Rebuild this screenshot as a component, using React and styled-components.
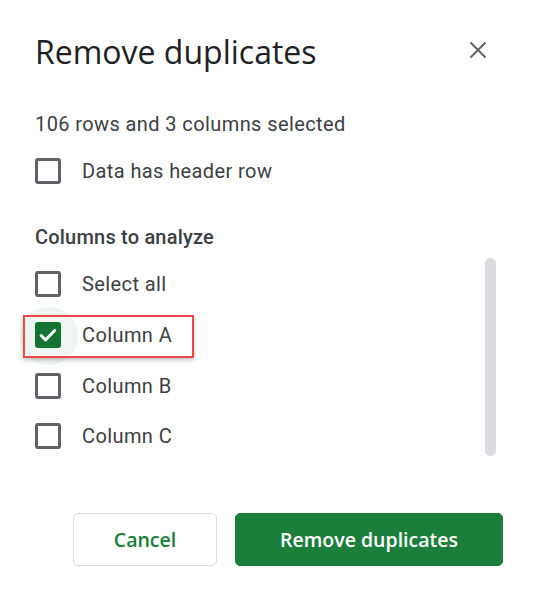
import React from "react";
import styled, { createGlobalStyle } from "styled-components";

const Global = createGlobalStyle`
  html, body { margin: 0; padding: 0; background: #fff; }
  body { font-family: Roboto, "Noto Sans", Arial, sans-serif; }
`;

const Dialog = styled.div`
  width: 536px;
  height: 600px;
  box-sizing: border-box;
  padding: 30px 33px 0 35px;
  display: flex;
  flex-direction: column;
  color: #3c4043;
`;

const Header = styled.div`
  display: flex;
  align-items: center;
  justify-content: space-between;
  height: 42px;
`;

const Title = styled.h1`
  margin: 0;
  font-family: "Open Sans", Roboto, sans-serif;
  font-weight: 400;
  font-size: 32px;
  color: #202124;
  letter-spacing: 0;
`;

const CloseButton = styled.button`
  border: 0;
  background: none;
  padding: 0;
  margin-right: 15px;
  margin-bottom: 3px;
  width: 20px;
  height: 20px;
  display: flex;
  align-items: center;
  justify-content: center;
  color: #5f6368;
  cursor: pointer;
`;

const Summary = styled.p`
  margin: 40px 0 0 0;
  font-size: 20px;
  line-height: 24px;
  letter-spacing: 0.4px;
  color: #3c4043;
`;

const SectionTitle = styled.h2`
  margin: 39px 0 0 0;
  font-size: 20px;
  line-height: 24px;
  font-weight: 500;
  letter-spacing: 0.2px;
  color: #3c4043;
`;

const ListArea = styled.div`
  display: flex;
  justify-content: space-between;
  align-items: flex-start;
  margin-top: 9px;
`;

const List = styled.div`
  display: flex;
  flex-direction: column;
  padding-top: 1px;
`;

const Row = styled.label`
  position: relative;
  flex: none;
  display: flex;
  align-items: center;
  gap: 21px;
  height: 50.7px;
  font-size: 20px;
  letter-spacing: 0.4px;
  color: #3c4043;
  ${(p) => p.$top && `height: 30px; margin-top: ${p.$top}px;`}
  ${(p) =>
    p.$highlight &&
    `
    &::after {
      content: "";
      position: absolute;
      left: -12px;
      top: 5px;
      width: 167px;
      height: 39px;
      border: 2px solid #ec4848;
      box-shadow: 0 2px 4px rgba(0,0,0,0.25);
      pointer-events: none;
    }
  `}
`;

const BoxWrap = styled.span`
  position: relative;
  width: 26px;
  height: 26px;
  flex: none;
  ${(p) =>
    p.$ripple &&
    `
    &::before {
      content: "";
      position: absolute;
      left: -15px;
      top: -15px;
      width: 58px;
      height: 58px;
      border-radius: 50%;
      background: rgba(24, 128, 56, 0.07);
    }
  `}
`;

const Box = styled.span`
  position: relative;
  box-sizing: border-box;
  display: flex;
  align-items: center;
  justify-content: center;
  width: 26px;
  height: 26px;
  border-radius: 3px;
  border: ${(p) => (p.$checked ? "none" : "3px solid #5f6368")};
  background: ${(p) => (p.$checked ? "#137333" : "#fff")};
`;

const Scrollbar = styled.div`
  width: 11px;
  height: 198px;
  border-radius: 6px;
  background: #dadce0;
  margin-right: 7px;
`;

const Footer = styled.div`
  display: flex;
  justify-content: flex-end;
  gap: 18px;
  margin-top: 51px;
`;

const Button = styled.button`
  box-sizing: border-box;
  height: 53px;
  border-radius: 5px;
  font-family: "Open Sans", Roboto, sans-serif;
  font-size: 19.5px;
  font-weight: 600;
  cursor: pointer;
  width: ${(p) => p.$width}px;
  border: 1px solid ${(p) => (p.$primary ? "#1b7f3b" : "#dadce0")};
  background: ${(p) => (p.$primary ? "#1b7f3b" : "#fff")};
  color: ${(p) => (p.$primary ? "#fff" : "#188038")};
`;

const Check = () => (
  <svg width="22" height="22" viewBox="0 0 24 24">
    <path
      d="M4.5 12.5l4.8 4.8 10-10.3"
      fill="none"
      stroke="#fff"
      strokeWidth="3.2"
      strokeLinecap="round"
      strokeLinejoin="round"
    />
  </svg>
);

const CheckRow = ({ label, checked, highlight, top }) => (
  <Row $highlight={highlight} $top={top}>
    <BoxWrap $ripple={checked}>
      <Box $checked={checked}>{checked && <Check />}</Box>
    </BoxWrap>
    {label}
  </Row>
);

export default function App() {
  return (
    <>
      <Global />
      <Dialog>
        <Header>
          <Title>Remove duplicates</Title>
          <CloseButton aria-label="Close">
            <svg width="18" height="18" viewBox="0 0 18 18">
              <path d="M1.5 1.5l15 15M16.5 1.5l-15 15" stroke="#5f6368" strokeWidth="2" />
            </svg>
          </CloseButton>
        </Header>
        <Summary>106 rows and 3 columns selected</Summary>
        <CheckRow label="Data has header row" top={20} />
        <SectionTitle>Columns to analyze</SectionTitle>
        <ListArea>
          <List>
            <CheckRow label="Select all" />
            <CheckRow label="Column A" checked highlight />
            <CheckRow label="Column B" />
            <CheckRow label="Column C" />
          </List>
          <Scrollbar />
        </ListArea>
        <Footer>
          <Button $width={144}>Cancel</Button>
          <Button $primary $width={268}>Remove duplicates</Button>
        </Footer>
      </Dialog>
    </>
  );
}
